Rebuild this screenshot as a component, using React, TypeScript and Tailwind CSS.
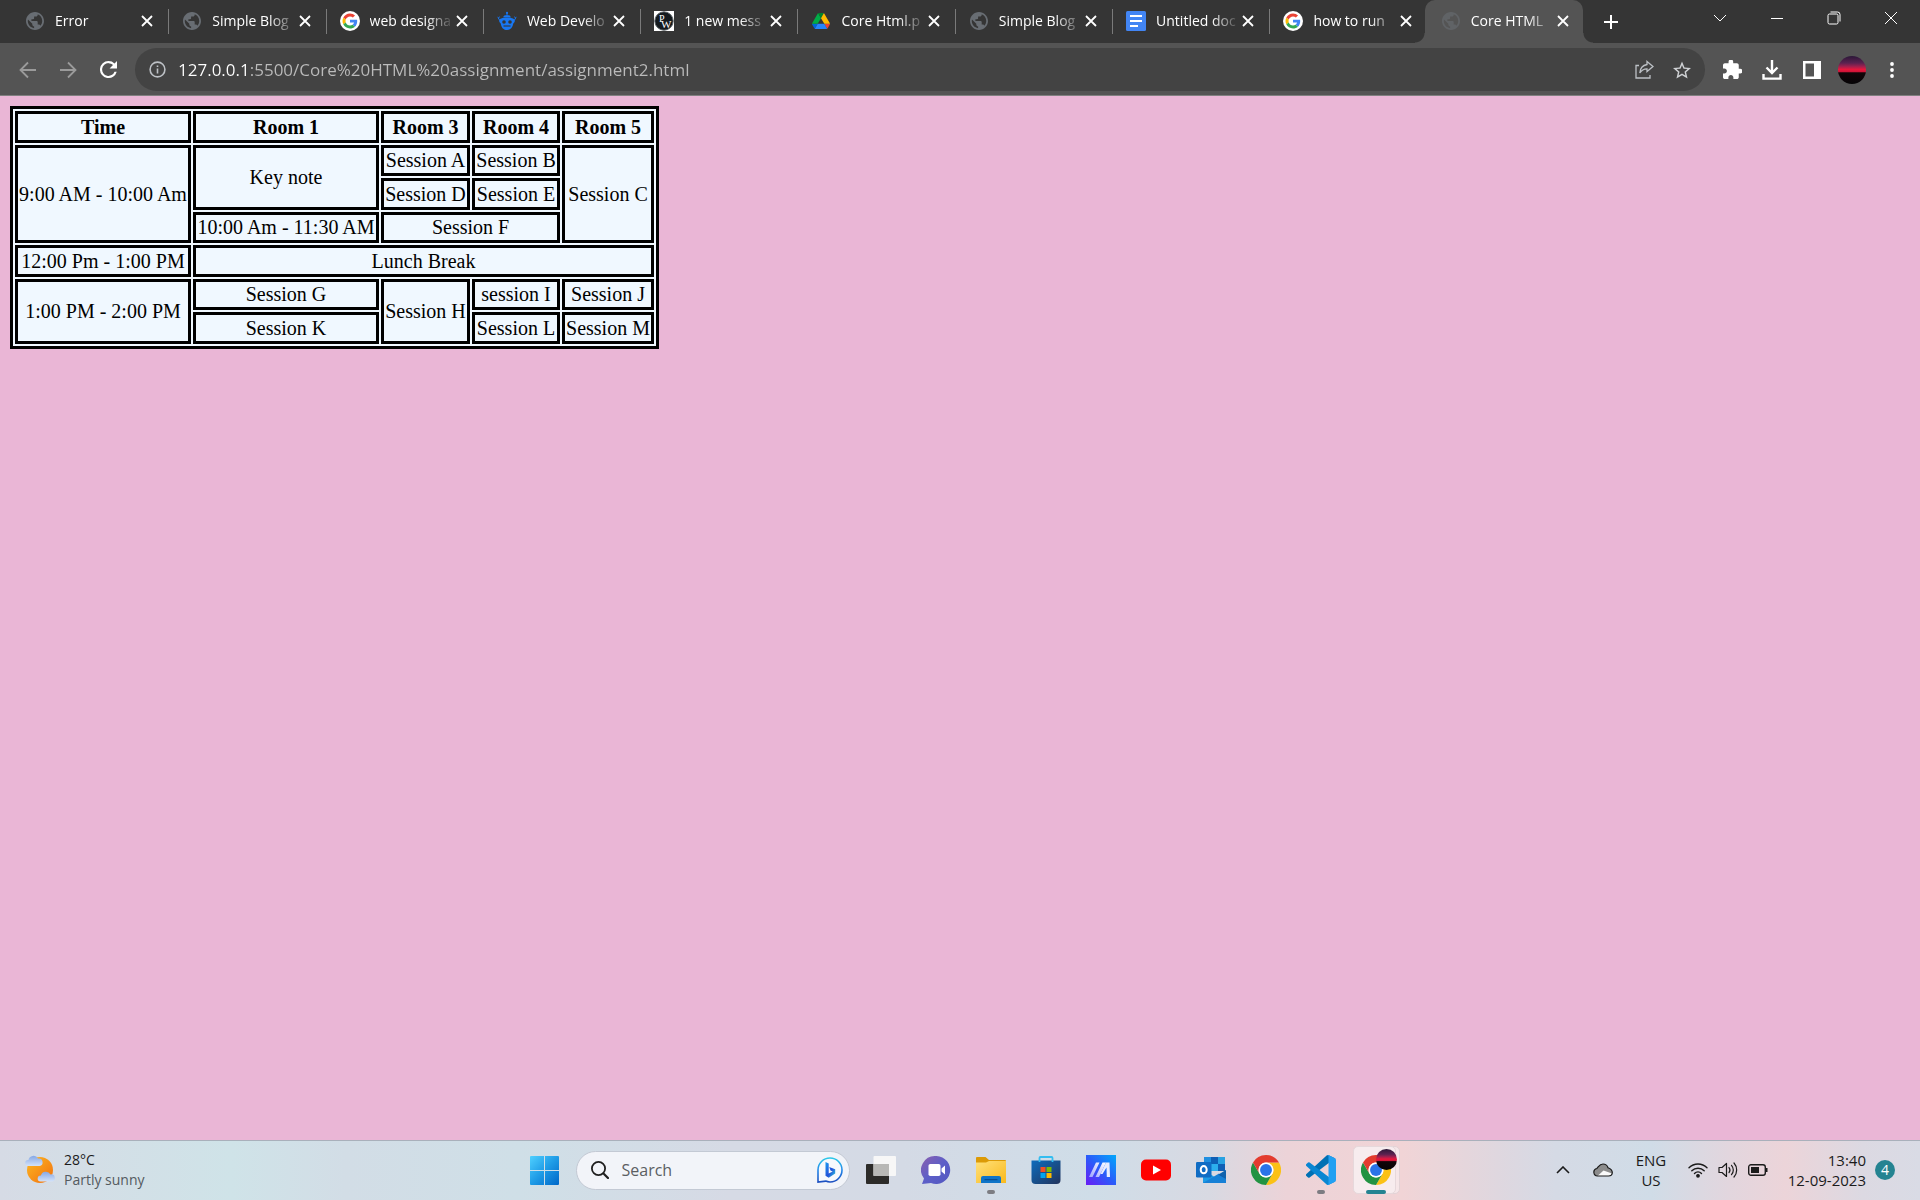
import React from "react";

const UI_FONT = "font-['Open_Sans','Noto_Sans',sans-serif]";

/* ---------- favicons ---------- */

function Globe() {
  return (
    <svg viewBox="2 2 20 20" className="size-[18px] mx-px text-[#686d73]" fill="currentColor">
      <path d="M12 2C6.480 2 2 6.480 2 12s4.480 10 10 10 10-4.480 10-10S17.520 2 12 2zm-1 17.930c-3.950-.49-7-3.850-7-7.930 0-.62.08-1.210.21-1.790L9 15v1c0 1.100.9 2 2 2v1.930zm6.900-2.540c-.26-.81-1-1.390-1.900-1.390h-1v-3c0-.55-.45-1-1-1H8v-2h2c.55 0 1-.45 1-1V7h2c1.100 0 2-.9 2-2v-.41c2.930 1.190 5 4.060 5 7.410 0 2.080-.8 3.970-2.100 5.390z" />
    </svg>
  );
}

function GoogleG() {
  return (
    <svg viewBox="0 0 80 80" className="size-5">
      <circle cx="40" cy="40" r="40" fill="#fff" />
      <g transform="translate(10 10) scale(1.25)">
        <path fill="#EA4335" d="M24 9.5c3.54 0 6.71 1.22 9.21 3.6l6.85-6.85C35.9 2.38 30.47 0 24 0 14.62 0 6.51 5.38 2.56 13.22l7.98 6.19C12.43 13.72 17.74 9.5 24 9.5z" />
        <path fill="#4285F4" d="M46.98 24.55c0-1.57-.15-3.09-.38-4.55H24v9.02h12.94c-.58 2.96-2.26 5.48-4.78 7.18l7.73 6c4.51-4.18 7.09-10.36 7.09-17.65z" />
        <path fill="#FBBC05" d="M10.53 28.59c-.48-1.45-.76-2.99-.76-4.59s.27-3.14.76-4.59l-7.98-6.19C.92 16.46 0 20.12 0 24c0 3.88.92 7.54 2.56 10.78l7.97-6.19z" />
        <path fill="#34A853" d="M24 48c6.48 0 11.93-2.13 15.89-5.81l-7.73-6c-2.15 1.45-4.92 2.3-8.16 2.3-6.26 0-11.57-4.22-13.47-9.91l-7.98 6.19C6.51 42.62 14.62 48 24 48z" />
      </g>
    </svg>
  );
}

function Robot() {
  return (
    <svg viewBox="0 0 20 20" className="size-5" fill="#1877f2">
      <circle cx="10" cy="1.9" r="1.1" />
      <path d="M9.500 2h1v3h-1zM6.300 6.300C6.300 4.800 8 4 10 4s3.700.8 3.700 2.300z" />
      <path d="M10 6.500c4.600 0 7.800 1.300 7.800 3.300 0 1.200-.5 2-1.500 2.600C15.600 16.600 13.300 19 10 19s-5.600-2.400-6.300-6.600c-1-.6-1.500-1.400-1.500-2.600 0-2 3.200-3.300 7.800-3.300z" />
      <path d="M2.800 9.500L1.200 6.800M.5 5.800l1 1 1.300-1M17.200 9.500l1.600-2.700M19.500 5.800l-1 1-1.300-1" fill="none" stroke="#1877f2" strokeWidth="1" />
      <circle cx="7" cy="11" r="1.800" fill="#353535" />
      <circle cx="13" cy="11" r="1.800" fill="#353535" />
      <path d="M6.500 15h7" stroke="#353535" strokeWidth="1.100" />
    </svg>
  );
}

function PwLogo() {
  return (
    <svg viewBox="0 0 20 20" className="size-5">
      <path fill="#fff" d="M0 0h20v20H0z" />
      <circle cx="10" cy="10" r="9.2" fill="#141a1e" stroke="#5b6266" strokeWidth="1" />
      <text x="5" y="10.500" fontSize="10" fill="#fff" fontFamily="Liberation Serif, serif">P</text>
      <text x="7" y="17" fontSize="11" fill="#fff" fontFamily="Liberation Serif, serif">W</text>
    </svg>
  );
}

function Drive() {
  return (
    <svg viewBox="0 0 87.3 78" className="mx-px h-4 w-[18px]">
      <path fill="#0066da" d="m6.6 66.85 3.85 6.65c.8 1.4 1.95 2.5 3.3 3.3l13.75-23.8h-27.5c0 1.55.4 3.1 1.2 4.5z" />
      <path fill="#00ac47" d="m43.65 25-13.75-23.8c-1.35.8-2.5 1.9-3.3 3.3l-25.4 44a9.06 9.06 0 0 0 -1.2 4.5h27.5z" />
      <path fill="#ea4335" d="m73.55 76.8c1.35-.8 2.5-1.9 3.3-3.3l1.6-2.75 7.65-13.25c.8-1.4 1.2-2.95 1.2-4.5h-27.502l5.852 11.5z" />
      <path fill="#00832d" d="m43.65 25 13.75-23.8c-1.35-.8-2.9-1.2-4.5-1.2h-18.5c-1.6 0-3.15.45-4.5 1.2z" />
      <path fill="#2684fc" d="m59.8 53h-32.3l-13.75 23.8c1.35.8 2.9 1.2 4.5 1.2h50.8c1.6 0 3.15-.45 4.5-1.2z" />
      <path fill="#ffba00" d="m73.4 26.5-12.7-22c-.8-1.4-1.95-2.5-3.3-3.3l-13.75 23.8 16.15 28h27.45c0-1.55-.4-3.1-1.2-4.5z" />
    </svg>
  );
}

function Docs() {
  return (
    <svg viewBox="0 0 20 20" className="size-5">
      <rect width="20" height="20" rx="1.500" fill="#4285f4" />
      <path d="M4 5h12M4 10h12M4 15h8" stroke="#fff" strokeWidth="2" />
    </svg>
  );
}

/* ---------- browser chrome ---------- */

type TabInfo = { title: string; icon: React.ReactNode; active?: boolean };

const tabs: TabInfo[] = [
  { title: "Error", icon: <Globe /> },
  { title: "Simple Blog", icon: <Globe /> },
  { title: "web designa", icon: <GoogleG /> },
  { title: "Web Develo", icon: <Robot /> },
  { title: "1 new mess", icon: <PwLogo /> },
  { title: "Core Html.p", icon: <Drive /> },
  { title: "Simple Blog", icon: <Globe /> },
  { title: "Untitled doc", icon: <Docs /> },
  { title: "how to run", icon: <GoogleG /> },
  { title: "Core HTML", icon: <Globe />, active: true },
];

function Tab({ tab, divider }: { tab: TabInfo; divider: boolean }) {
  return (
    <div
      className={
        tab.active
          ? "relative flex h-[43px] min-w-0 flex-1 items-center rounded-t-[10px] bg-[#545454] pb-px pl-4 pr-3"
          : "relative flex h-[43px] min-w-0 flex-1 items-center pb-px pl-4 pr-[11px]"
      }
    >
      {tab.active && (
        <>
          <span className="absolute bottom-0 right-full size-[10px] bg-[radial-gradient(circle_at_0_0,#353535_9px,#545454_10px)]" />
          <span className="absolute bottom-0 left-full size-[10px] bg-[radial-gradient(circle_at_100%_0,#353535_9px,#545454_10px)]" />
        </>
      )}
      <span className={tab.active ? "flex w-5 shrink-0 opacity-60" : "flex w-5 shrink-0"}>{tab.icon}</span>
      <a
        href="#"
        className="ml-[10px] min-w-0 flex-1 overflow-hidden whitespace-nowrap text-sm leading-5 text-white [mask-image:linear-gradient(90deg,#000_70%,rgba(0,0,0,0.15))]"
      >
        {tab.title}
      </a>
      <button aria-label="Close tab" className="ml-1 flex size-4 shrink-0 items-center justify-center">
        <svg viewBox="0 0 12 12" className="size-3" stroke="#fff" strokeWidth="1.800">
          <path d="M1 1l10 10M11 1L1 11" />
        </svg>
      </button>
      {divider && <span className="absolute -right-[3px] top-[9px] h-[25px] w-px bg-[#7a7a7a]" />}
    </div>
  );
}

function WindowButton({ label, children }: { label: string; children: React.ReactNode }) {
  return (
    <button aria-label={label} className="flex h-9 w-[57px] items-center justify-center">
      <svg viewBox="0 0 14 14" className="size-[14px]" fill="none" stroke="#fff" strokeWidth="1">
        {children}
      </svg>
    </button>
  );
}

function TabStrip() {
  return (
    <div className="flex h-[43px] bg-[#353535] pl-[9px] pr-px">
      <div className="flex min-w-0 flex-1">
        {tabs.map((t, i) => (
          <Tab key={i} tab={t} divider={i < 8} />
        ))}
      </div>
      <button aria-label="New tab" className="ml-[13px] flex w-[30px] items-center justify-center">
        <svg viewBox="0 0 16 16" className="size-4" stroke="#fff" strokeWidth="2">
          <path d="M8 1v14M1 8h14" />
        </svg>
      </button>
      <div className="ml-[65px] flex">
        <WindowButton label="Search tabs"><path d="M1 4l6 6 6-6" /></WindowButton>
        <WindowButton label="Minimize"><path d="M1 7.500h12" /></WindowButton>
        <WindowButton label="Restore">
          <rect x="1" y="3" width="10" height="10" rx="1.500" />
          <path d="M3.500 1h7A2.500 2.500 0 0 1 13 3.500v7" />
        </WindowButton>
        <WindowButton label="Close"><path d="M1 1l12 12M13 1L1 13" /></WindowButton>
      </div>
    </div>
  );
}

function ToolButton({ label, children }: { label: string; children: React.ReactNode }) {
  return (
    <button aria-label={label} className="flex h-10 w-10 shrink-0 items-center justify-center">
      {children}
    </button>
  );
}

function Sunset({ className }: { className: string }) {
  return (
    <span
      className={
        "block rounded-full bg-[linear-gradient(180deg,#2b1838_0%,#5a2250_25%,#a3204e_38%,#e8163c_48%,#d01438_56%,#120509_60%,#050305_100%)] " +
        className
      }
    />
  );
}

function Toolbar() {
  return (
    <div className="flex items-center border-b border-[#808080] bg-[#545454] pb-1 pl-2 pr-2 pt-[5px]">
      <ToolButton label="Back">
        <svg viewBox="0 0 18 18" className="size-[18px]" fill="none" stroke="#9b9b9b" strokeWidth="1.800">
          <path d="M17 9H2M9 1.500L1.500 9 9 16.500" />
        </svg>
      </ToolButton>
      <ToolButton label="Forward">
        <svg viewBox="0 0 18 18" className="size-[18px]" fill="none" stroke="#9b9b9b" strokeWidth="1.800">
          <path d="M1 9h15M9 1.500L16.500 9 9 16.500" />
        </svg>
      </ToolButton>
      <ToolButton label="Reload">
        <svg viewBox="4 4 16 16" className="size-[17px]" fill="#fff">
          <path d="M17.650 6.350A7.958 7.958 0 0 0 12 4a8 8 0 1 0 7.730 10h-2.080A6 6 0 1 1 12 6c1.660 0 3.140.69 4.220 1.780L13 11h7V4l-2.350 2.350z" />
        </svg>
      </ToolButton>
      <div className="ml-[7px] mr-[7px] flex h-[43px] min-w-0 flex-1 items-center rounded-full bg-[#434343] pl-[14px] pr-1">
        <svg viewBox="0 0 17 17" className="size-[17px] shrink-0" fill="none" stroke="#bdc1c6" strokeWidth="1.600">
          <circle cx="8.500" cy="8.500" r="7.400" />
          <path d="M8.500 7.400v5M8.500 4.400v1.700" />
        </svg>
        <input
          aria-label="Address"
          readOnly
          value="127.0.0.1:5500/Core%20HTML%20assignment/assignment2.html"
          className="ml-3 min-w-0 flex-1 bg-[linear-gradient(90deg,#fff_70px,#bbb_70px)] bg-clip-text text-[17px] leading-6 text-transparent outline-none"
        />
        <button aria-label="Share" className="flex size-[38px] items-center justify-center">
          <svg viewBox="0 0 19 19" className="size-[19px]" fill="none" stroke="#bdc1c6" strokeWidth="1.300">
            <path d="M4 5.500H1v12.500h14V15" />
            <path d="M12 1.500l6 5-6 5V8.800C8.500 8.800 6.500 10 4.800 13c.3-4.500 3-7.800 7.200-8.500z" />
          </svg>
        </button>
        <button aria-label="Bookmark" className="flex size-[38px] items-center justify-center">
          <svg viewBox="2 2 20 19" className="size-[18px]" fill="#cfd1d4">
            <path d="M22 9.240l-7.190-.62L12 2 9.190 8.630 2 9.240l5.460 4.730L5.820 21 12 17.270 18.180 21l-1.630-7.030L22 9.240zM12 15.400l-3.760 2.270 1-4.280-3.320-2.880 4.380-.38L12 6.100l1.710 4.040 4.380.38-3.320 2.880 1 4.280L12 15.400z" />
          </svg>
        </button>
      </div>
      <ToolButton label="Extensions">
        <svg viewBox="2 1.500 20.500 20.500" className="size-[19px]" fill="#fff">
          <path d="M20.500 11H19V7c0-1.100-.9-2-2-2h-4V3.500a2.500 2.500 0 0 0-5 0V5H4c-1.100 0-1.990.9-1.990 2v3.800H3.500c1.490 0 2.700 1.210 2.700 2.700s-1.210 2.700-2.700 2.700H2V20c0 1.100.9 2 2 2h3.800v-1.500c0-1.490 1.210-2.700 2.700-2.700 1.490 0 2.700 1.210 2.700 2.700V22H17c1.100 0 2-.9 2-2v-4h1.500a2.500 2.500 0 0 0 0-5z" />
        </svg>
      </ToolButton>
      <ToolButton label="Downloads">
        <svg viewBox="0 0 20 20" className="size-5" fill="none" stroke="#fff" strokeWidth="2.400">
          <path d="M10 0v12M4.500 7.500L10 13l5.500-5.500M1.500 14v4.600h17V14" />
        </svg>
      </ToolButton>
      <ToolButton label="Side panel">
        <svg viewBox="0 0 18 18" className="size-[18px]" fill="#fff">
          <path fillRule="evenodd" d="M0 0h18v18H0zM2.500 2.500v13H11v-13z" />
        </svg>
      </ToolButton>
      <ToolButton label="Profile">
        <Sunset className="size-7" />
      </ToolButton>
      <ToolButton label="Menu">
        <svg viewBox="0 0 4 16" className="h-4 w-1" fill="#fff">
          <circle cx="2" cy="2" r="1.900" />
          <circle cx="2" cy="8" r="1.900" />
          <circle cx="2" cy="14" r="1.900" />
        </svg>
      </ToolButton>
    </div>
  );
}

/* ---------- page ---------- */

const CELL = "border-[3px] border-black p-px";

function Schedule() {
  return (
    <table className="w-[649px] table-fixed border-separate border-spacing-[2px] border-[3px] border-black bg-[#f0f8ff] text-center font-['Liberation_Serif',serif] text-xl leading-[23px] whitespace-nowrap text-black">
      <colgroup>
        <col className="w-[176px]" />
        <col className="w-[186px]" />
        <col className="w-[89px]" />
        <col className="w-[88px]" />
        <col className="w-[92px]" />
      </colgroup>
      <tbody className="[&>tr:nth-child(even)]:h-[31px] [&>tr:nth-child(odd)]:h-8">
        <tr>
          <th className={CELL}>Time</th>
          <th className={CELL}>Room 1</th>
          <th className={CELL}>Room 3</th>
          <th className={CELL}>Room 4</th>
          <th className={CELL}>Room 5</th>
        </tr>
        <tr>
          <td className={CELL} rowSpan={3}>9:00 AM - 10:00 Am</td>
          <td className={CELL} rowSpan={2}>Key note</td>
          <td className={CELL}>Session A</td>
          <td className={CELL}>Session B</td>
          <td className={CELL} rowSpan={3}>Session C</td>
        </tr>
        <tr>
          <td className={CELL}>Session D</td>
          <td className={CELL}>Session E</td>
        </tr>
        <tr>
          <td className={CELL}>10:00 Am - 11:30 AM</td>
          <td className={CELL} colSpan={2}>Session F</td>
        </tr>
        <tr>
          <td className={CELL}>12:00 Pm - 1:00 PM</td>
          <td className={CELL} colSpan={4}>Lunch Break</td>
        </tr>
        <tr>
          <td className={CELL} rowSpan={2}>1:00 PM - 2:00 PM</td>
          <td className={CELL}>Session G</td>
          <td className={CELL} rowSpan={2}>Session H</td>
          <td className={CELL}>session I</td>
          <td className={CELL}>Session J</td>
        </tr>
        <tr>
          <td className={CELL}>Session K</td>
          <td className={CELL}>Session L</td>
          <td className={CELL}>Session M</td>
        </tr>
      </tbody>
    </table>
  );
}

/* ---------- taskbar icons ---------- */

function WindowsLogo() {
  return (
    <svg viewBox="0 0 29 29" className="size-[29px]">
      <defs>
        <linearGradient id="win" x1="0" y1="0" x2="1" y2="1">
          <stop offset="0" stopColor="#4fd0ff" />
          <stop offset=".5" stopColor="#1e9be6" />
          <stop offset="1" stopColor="#0067c8" />
        </linearGradient>
      </defs>
      <path fill="url(#win)" d="M1 0h13v14H0V1a1 1 0 0 1 1-1zM15 0h13a1 1 0 0 1 1 1v13H15zM0 15h14v14H1a1 1 0 0 1-1-1zM15 15h14v13a1 1 0 0 1-1 1H15z" />
    </svg>
  );
}

function BingLogo() {
  return (
    <svg viewBox="0 0 26 26" className="size-[26px] shrink-0" fill="none">
      <defs>
        <linearGradient id="bingRing" x1="0" y1="0" x2="0" y2="1">
          <stop offset="0" stopColor="#2cc9e8" />
          <stop offset=".5" stopColor="#2388ea" />
          <stop offset="1" stopColor="#1d4fc0" />
        </linearGradient>
        <linearGradient id="bingB" x1="0" y1="0" x2="1" y2="1">
          <stop offset="0" stopColor="#1b9df2" />
          <stop offset=".55" stopColor="#2350d8" />
          <stop offset="1" stopColor="#2ad0e0" />
        </linearGradient>
      </defs>
      <path stroke="url(#bingRing)" strokeWidth="1.600" d="M1 25V13A12 12 0 1 1 13 25c-1.500 0-3-.3-4.300-.9z" fill="#f7f9fd" />
      <path fill="url(#bingB)" d="M8.500 5l3.200 1.400v10.200l4-2.200-2.200-1-1.300-3.300 6 2.100v4.300l-6.500 4.200-3.200-2z" />
    </svg>
  );
}

function TaskView() {
  return (
    <svg viewBox="0 0 30 30" className="size-[30px]">
      <rect x="0" y="9" width="23" height="20" rx="1" fill="#2c2b29" />
      <rect x="7.500" y="1" width="22.500" height="20" rx="1" fill="#f7f7f7" />
      <path d="M7.500 9H23v12H7.500z" fill="#b8b8b6" />
    </svg>
  );
}

function Chat() {
  return (
    <svg viewBox="0 0 30 30" className="size-[30px]">
      <defs>
        <linearGradient id="chat" x1="0" y1="0" x2="1" y2="1">
          <stop offset="0" stopColor="#8b5fae" />
          <stop offset=".5" stopColor="#5d5fc8" />
          <stop offset="1" stopColor="#5257c0" />
        </linearGradient>
      </defs>
      <path fill="url(#chat)" d="M15.500 1A14 14 0 1 1 10 28l-9 1 2-5.500A14 14 0 0 1 15.500 1z" />
      <rect x="7.500" y="9" width="12" height="12" rx="1.800" fill="#fff" />
      <path d="M20.500 13.500l3.500-3v9l-3.500-3z" fill="#fff" />
    </svg>
  );
}

function Explorer() {
  return (
    <svg viewBox="0 0 30 30" className="size-[30px]">
      <defs>
        <linearGradient id="folder" x1="0" y1="0" x2="1" y2="1">
          <stop offset="0" stopColor="#ffe07a" />
          <stop offset="1" stopColor="#f9b91c" />
        </linearGradient>
      </defs>
      <path fill="#dc9a06" d="M1 2h8.500L13 5h16a1 1 0 0 1 1 1v6H0V3a1 1 0 0 1 1-1z" />
      <path fill="url(#folder)" d="M0 7.500h10L13 6h17v22H0z" />
      <path fill="#0f74c8" d="M7 21h16a2 2 0 0 1 2 2v5H5v-5a2 2 0 0 1 2-2z" />
      <path d="M9 24.700h12" stroke="#084e93" strokeWidth="1.200" strokeLinecap="round" />
    </svg>
  );
}

function Store() {
  return (
    <svg viewBox="0 0 30 30" className="size-[30px]">
      <defs>
        <linearGradient id="store" x1="0" y1="0" x2="1" y2="1">
          <stop offset="0" stopColor="#0d6cbd" />
          <stop offset="1" stopColor="#23345c" />
        </linearGradient>
      </defs>
      <path fill="url(#store)" d="M.5 5.500h29V25a4 4 0 0 1-4 4h-21a4 4 0 0 1-4-4z" />
      <path d="M8.500 7V3a1 1 0 0 1 1-1h11a1 1 0 0 1 1 1v4" fill="none" stroke="#34bdf0" strokeWidth="1.800" />
      <path fill="#f25022" d="M9.500 12h5v5h-5z" />
      <path fill="#7fba00" d="M15.500 12h5v5h-5z" />
      <path fill="#00a4ef" d="M9.500 18h5v5h-5z" />
      <path fill="#ffb900" d="M15.500 18h5v5h-5z" />
    </svg>
  );
}

function MyAsus() {
  return (
    <svg viewBox="0 0 30 30" className="size-[30px]">
      <defs>
        <linearGradient id="asus" x1="0" y1="1" x2="1" y2="0">
          <stop offset="0" stopColor="#6a1cf5" />
          <stop offset=".5" stopColor="#2a5cfa" />
          <stop offset="1" stopColor="#00a8fb" />
        </linearGradient>
        <linearGradient id="asusMark" x1="0" y1="1" x2="1" y2="0">
          <stop offset="0" stopColor="#9ea4ff" />
          <stop offset="1" stopColor="#fff" />
        </linearGradient>
      </defs>
      <path fill="url(#asus)" d="M0 0h30v30H0z" />
      <path fill="url(#asusMark)" d="M3 22L10 7.500H13.500L6.500 22zM9.500 22L16.500 7.500H20L13 22z" />
      <path fill="#e9edff" d="M20 7.500h3.500L24 22h-3.200l-.3-9.500-4 6.500h-2z" />
    </svg>
  );
}

function YouTube() {
  return (
    <svg viewBox="0 0 30 30" className="size-[30px]">
      <rect x="0" y="4.500" width="30" height="21" rx="5" fill="#f00" />
      <path d="M12 10.500v9l8-4.500z" fill="#fff" />
    </svg>
  );
}

function Outlook() {
  return (
    <svg viewBox="0 0 30 30" className="size-[30px]">
      <path fill="#0f5fb5" d="M8 2h21v14H8z" />
      <path fill="#1f8fe0" d="M8 2h7v7H8zM15 9h7v7h-7z" />
      <path fill="#32b8f2" d="M15 2h14v7h-7v7h-7V9h7V2z" opacity=".75" />
      <path fill="#1c9be6" d="M7 14l11.500 8L30 15v13H7z" />
      <path fill="#1680d6" d="M7 28l16-9.500L30 24v4z" />
      <path fill="#0b4a94" d="M30 15l-7.500 4.800L30 24z" opacity=".7" />
      <rect x="0" y="7" width="15.500" height="15.500" rx="1.200" fill="#0f6cc4" />
      <ellipse cx="7.700" cy="14.700" rx="3" ry="3.600" fill="none" stroke="#fff" strokeWidth="2" />
    </svg>
  );
}

function Chrome() {
  const blade = "M24 12H44.785A24 24 0 0 0 3.215 12L13.608 30A12 12 0 0 1 24 12z";
  return (
    <svg viewBox="0 0 48 48" className="size-[30px]">
      <path d={blade} fill="#fbc116" transform="rotate(120 24 24)" />
      <path d={blade} fill="#229342" transform="rotate(240 24 24)" />
      <path d={blade} fill="#e33b2e" />
      <circle cx="24" cy="24" r="12" fill="#fff" />
      <circle cx="24" cy="24" r="9.500" fill="#2a73e8" />
    </svg>
  );
}

function VsCode() {
  const arm = "M96.460 10.800L75.860.88a6.230 6.230 0 0 0-7.110 1.200L1.300 63.580a4.170 4.170 0 0 0 0 6.170l5.500 5a4.170 4.170 0 0 0 5.330.24L93.360 13.370C96.080 11.300 100 13.240 100 16.670v-.24c0-2.400-1.380-4.600-3.540-5.640z";
  return (
    <svg viewBox="0 0 100 100" className="size-[30px]">
      <path fill="#0070b4" d={arm} />
      <path fill="#0a86d2" d={arm} transform="matrix(1 0 0 -1 0 100)" />
      <path fill="#22a0f2" d="M75.860 99.130a6.230 6.230 0 0 1-7.110-1.210c2.310 2.310 6.250.67 6.250-2.590V4.670c0-3.260-3.940-4.900-6.250-2.590a6.230 6.230 0 0 1 7.110-1.210l20.600 9.900A6.250 6.250 0 0 1 100 16.400v67.200a6.250 6.250 0 0 1-3.540 5.630z" />
    </svg>
  );
}

function TaskButton({ label, running, children }: { label: string; running?: boolean; children: React.ReactNode }) {
  return (
    <button aria-label={label} className="relative flex h-12 w-[55px] items-center justify-center">
      {children}
      {running && <span className="absolute bottom-0 h-1 w-2 rounded-full bg-[#7c7c82]" />}
    </button>
  );
}

function Weather() {
  return (
    <button className="flex items-center gap-[9px] text-left text-sm leading-5">
      <svg viewBox="0 0 30 30" className="size-[30px]">
        <defs>
          <linearGradient id="sun" x1="0" y1="0" x2="1" y2="1">
            <stop offset="0" stopColor="#fcb823" />
            <stop offset="1" stopColor="#f2700f" />
          </linearGradient>
          <linearGradient id="cloud" x1="0" y1="0" x2="0" y2="1">
            <stop offset="0" stopColor="#86a8e6" />
            <stop offset="1" stopColor="#d3e2fa" />
          </linearGradient>
        </defs>
        <circle cx="15" cy="15" r="13" fill="url(#sun)" />
        <path fill="url(#cloud)" d="M3 11a3 3 0 0 1 .4-6A5.200 5.200 0 0 1 13 3.500 3.800 3.800 0 0 1 14.500 11z" />
        <path fill="url(#cloud)" d="M15.500 26.500a3 3 0 0 1 .4-6 5.200 5.200 0 0 1 9.600-1 3.500 3.500 0 0 1 1.500 7z" />
      </svg>
      <span>
        <span className="block text-[#1b1b1b]">28°C</span>
        <span className="block text-[#545a60]">Partly sunny</span>
      </span>
    </button>
  );
}

function Tray() {
  return (
    <div className="flex items-center justify-end text-[15px] leading-5 text-[#1b1b1b]">
      <button aria-label="Show hidden icons">
        <svg viewBox="0 0 14 8" className="h-2 w-[14px]" fill="none" stroke="#1b1b1b" strokeWidth="1.600">
          <path d="M1 7l6-6 6 6" />
        </svg>
      </button>
      <button aria-label="OneDrive" className="ml-[23px]">
        <svg viewBox="0 0 20 14" className="h-[14px] w-5">
          <path d="M4.500 13a3.800 3.800 0 0 1-.7-7.500C5.500 4 6.500 1 10 1c3 0 4.300 1.800 5 3.700 2.500 1 4.300 2.300 4.300 4.800 0 2-1.600 3.500-3.800 3.500z" fill="#8c8c8c" />
          <path d="M4.500 13L10.500 7.500 19 10.500c-.5 1.500-1.800 2.500-3.500 2.500z" fill="#fafafa" />
          <path d="M4.500 13a3.800 3.800 0 0 1-.7-7.500C5.500 4 6.500 1 10 1c3 0 4.300 1.800 5 3.700 2.500 1 4.300 2.300 4.300 4.800 0 2-1.600 3.500-3.800 3.500z" fill="none" stroke="#1b1b1b" strokeWidth="1.200" />
        </svg>
      </button>
      <button className="ml-[22px] w-8 text-center">
        <span className="block">ENG</span>
        <span className="block">US</span>
      </button>
      <button aria-label="Network, volume and battery" className="ml-[21px] flex items-center gap-[10px]">
        <svg viewBox="0 0 20 16" className="h-4 w-5" fill="none" stroke="#1b1b1b" strokeWidth="1.400" strokeLinecap="round">
          <path d="M1 5.800a12.600 12.600 0 0 1 18 0M3.800 8.800a8.700 8.700 0 0 1 12.400 0M6.500 11.500a5 5 0 0 1 7 0" />
          <circle cx="10" cy="13.800" r="1.200" fill="#1b1b1b" />
        </svg>
        <svg viewBox="0 0 20 18" className="h-[18px] w-5" fill="none" stroke="#1b1b1b" strokeWidth="1.200" strokeLinecap="round">
          <path d="M1 6.500h3L8.500 2.500v13L4 11.500H1z" strokeLinejoin="round" />
          <path d="M11 6.500a4 4 0 0 1 0 5M13.500 4.300a7 7 0 0 1 0 9.400M16 2a10.500 10.500 0 0 1 0 14" />
        </svg>
        <svg viewBox="0 0 20 12" className="h-3 w-5">
          <rect x=".7" y=".7" width="16.600" height="10.600" rx="2.300" fill="none" stroke="#1b1b1b" strokeWidth="1.400" />
          <path d="M3 3h8v6H3zM18 4h1.500v4H18z" fill="#1b1b1b" />
        </svg>
      </button>
      <button className="ml-[19px] w-[79px] text-right whitespace-nowrap">
        <span className="block">13:40</span>
        <span className="block">12-09-2023</span>
      </button>
      <button aria-label="Notifications" className="ml-[9px] flex size-5 items-center justify-center rounded-full bg-[#248391] text-sm text-white">
        4
      </button>
    </div>
  );
}

function Taskbar() {
  return (
    <footer className="grid h-[60px] grid-cols-[1fr_auto_1fr] items-center border-t border-[#a9b0bb] bg-[linear-gradient(90deg,#d6dbe5_0%,#cfe3e8_12%,#d2dde6_18%,#cfdfe7_27%,#d6dae5_38%,#d4dae5_47%,#cfdde8_57%,#d8d9e2_63%,#ecd3d8_67%,#f1d4d6_73%,#dfd7df_78%,#d5dae5_81%,#d0dce7_86%,#e2d6de_90%,#ecd4d9_93%,#dcd9e2_97%,#d9dbe5_100%)] pb-px pl-[25px] pr-[25px]">
      <Weather />
      <div className="flex items-center">
        <TaskButton label="Start"><WindowsLogo /></TaskButton>
        <label className="ml-1 mr-1 flex h-[39px] w-[274px] items-center rounded-full border border-[#c3c9d4] bg-[#f2f4f9] pl-[14px] pr-[6px]">
          <svg viewBox="0 0 18 18" className="size-[18px] shrink-0" fill="none" stroke="#1f1f1f" strokeWidth="1.800" strokeLinecap="round">
            <circle cx="7.500" cy="7.500" r="6.600" />
            <path d="M12.500 12.500L17 17" strokeWidth="2.200" />
          </svg>
          <input
            aria-label="Search"
            placeholder="Search"
            className="ml-[13px] min-w-0 flex-1 bg-transparent text-base leading-6 outline-none placeholder:text-[#5b5e63]"
          />
          <BingLogo />
        </label>
        <TaskButton label="Task view"><TaskView /></TaskButton>
        <TaskButton label="Chat"><Chat /></TaskButton>
        <TaskButton label="File Explorer" running><Explorer /></TaskButton>
        <TaskButton label="Microsoft Store"><Store /></TaskButton>
        <TaskButton label="MyASUS"><MyAsus /></TaskButton>
        <TaskButton label="YouTube"><YouTube /></TaskButton>
        <TaskButton label="Outlook"><Outlook /></TaskButton>
        <TaskButton label="Google Chrome"><Chrome /></TaskButton>
        <TaskButton label="Visual Studio Code" running><VsCode /></TaskButton>
        <button aria-label="Google Chrome, active window" className="relative flex h-12 w-[55px] items-center justify-center">
          <span className="absolute inset-y-0 left-1 right-1 rounded-[5px] border border-[#e3d3d6] bg-[#f6e6e8]" />
          <span className="absolute inset-y-0 left-1 right-2 rounded-[5px] border border-[#e6d8db] bg-[#f7ecee]" />
          <span className="relative">
            <Chrome />
            <Sunset className="absolute -right-[6px] -top-[6px] size-[21px]" />
          </span>
          <span className="absolute bottom-0 h-1 w-5 rounded-full bg-[#248391]" />
        </button>
      </div>
      <Tray />
    </footer>
  );
}

export default function App() {
  return (
    <div className={"flex min-h-screen flex-col " + UI_FONT}>
      <header>
        <TabStrip />
        <Toolbar />
      </header>
      <main className="flex-1 bg-[#eab6d6] p-[10px]">
        <Schedule />
      </main>
      <Taskbar />
    </div>
  );
}
